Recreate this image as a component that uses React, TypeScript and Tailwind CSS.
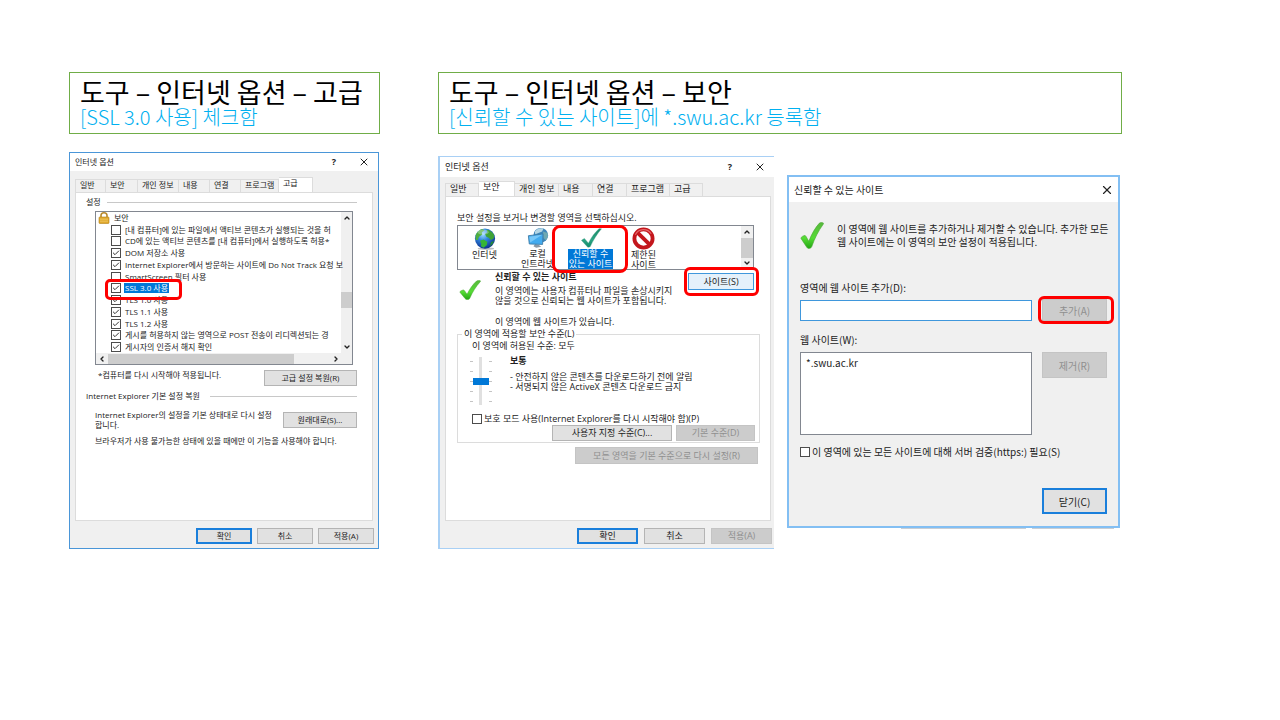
import type { ReactNode } from "react";
import { Check, ChevronDown, ChevronLeft, ChevronRight, ChevronUp, X } from "lucide-react";

const wideStack = "font-['Open_Sans','Noto_Sans_CJK_KR',sans-serif]";
const plainStack = "font-['Noto_Sans_CJK_KR',sans-serif]";

function Heading({ title, note }: { title: string; note: string }) {
  return (
    <header className={"border border-[#70ad47] bg-white px-2.5 py-[5px] whitespace-nowrap " + plainStack}>
      <h2 className="text-[27px] leading-7 text-black">{title}</h2>
      <p className="text-[20px] leading-[22px] font-light text-[#00b0f0]">{note}</p>
    </header>
  );
}

function Highlight({ className }: { className: string }) {
  return <span aria-hidden="true" className={"pointer-events-none absolute z-10 border-[3px] border-[#fe0000] " + className} />;
}

function Button({
  children,
  className,
  primary,
  disabled,
}: {
  children: ReactNode;
  className: string;
  primary?: boolean;
  disabled?: boolean;
}) {
  const look = disabled
    ? "border border-[#c4c4c4] bg-[#cccccc] text-[#8f8f8f]"
    : primary
      ? "border-2 border-[#1a7fdb] bg-[#e1e1e1]"
      : "border border-[#b4b4b4] bg-[#e1e1e1]";
  return (
    <button
      type="button"
      disabled={disabled}
      className={"flex flex-none items-center justify-center whitespace-nowrap " + look + " " + className}
    >
      {children}
    </button>
  );
}

function CheckBox({
  label,
  checked,
  selected,
  className = "",
  gap = "ml-0.5",
}: {
  label: string;
  checked?: boolean;
  selected?: boolean;
  className?: string;
  gap?: string;
}) {
  return (
    <label className={"flex min-w-0 items-center whitespace-nowrap " + className}>
      <span className="grid size-[10px] flex-none">
        <input
          type="checkbox"
          defaultChecked={checked}
          className="peer col-start-1 row-start-1 size-full appearance-none border border-[#4c4c4c] bg-white"
        />
        <Check
          strokeWidth={3}
          className="pointer-events-none invisible col-start-1 row-start-1 size-2 place-self-center text-[#333] peer-checked:visible"
        />
      </span>
      <span className={selected ? "ml-[3px] bg-[#0078d7] px-px text-white" : gap}>{label}</span>
    </label>
  );
}

function Tabs({ items, active }: { items: { name: string; width: string }[]; active: string }) {
  return (
    <div role="tablist" className="flex items-end">
      {items.map(({ name, width }) => (
        <button
          key={name}
          type="button"
          role="tab"
          aria-selected={name === active}
          className={
            "flex justify-start border-t border-r border-[#dcdcdc] pl-1 whitespace-nowrap " +
            width +
            (name === active ? " h-[15px] bg-white" : " h-[13px] bg-[#f0f0f0]")
          }
        >
          {name}
        </button>
      ))}
    </div>
  );
}

function GreenCheck({ className, tone = "green" }: { className: string; tone?: "green" | "teal" }) {
  const id = "tick-" + tone;
  const green = tone === "green";
  return (
    <svg viewBox="0 0 24 24" preserveAspectRatio="none" className={className} aria-hidden="true">
      <defs>
        <linearGradient id={id} x1="0" y1="0" x2="0" y2="1">
          <stop offset="0" stopColor={green ? "#58b83c" : "#1c8a68"} />
          <stop offset="0.6" stopColor={green ? "#55dc35" : "#2ba583"} />
          <stop offset="1" stopColor={green ? "#22a512" : "#118a6b"} />
        </linearGradient>
      </defs>
      {green ? (
        <path
          d="M1 14.600Q.8 13.600 2.400 12.800L4.400 12Q5.400 11.800 6 12.800L8.800 17.200C11.600 10.800 15 5.400 19.200 1.200Q20.200.4 21.400.5L23.200.8Q23.900 1.200 23.200 2C18.400 7.800 14.600 14.600 11.800 21.800Q11.200 23.200 9.800 23.400L8.600 23.500Q7.400 23.500 6.600 22.200Z"
          fill={"url(#" + id + ")"}
          stroke="#49a833"
          strokeWidth="0.6"
        />
      ) : (
        <path
          d="M1.600 14.800 4.800 12.600 9.200 18.200C12.400 11 16.400 5 20.800.8L23.400 1C18.600 7.200 14.400 14.600 11 22.600L8.600 23.200Z"
          fill={"url(#" + id + ")"}
          stroke="#208a70"
          strokeWidth="0.4"
        />
      )}
    </svg>
  );
}

function Globe() {
  return (
    <svg viewBox="0 0 24 24" className="size-[22px]" aria-hidden="true">
      <defs>
        <radialGradient id="sea" cx="0.4" cy="0.3" r="0.75">
          <stop offset="0" stopColor="#9fdcff" />
          <stop offset="0.4" stopColor="#2f86e0" />
          <stop offset="1" stopColor="#0a2a86" />
        </radialGradient>
      </defs>
      <ellipse cx="13" cy="22.500" rx="9" ry="1.200" fill="#b9bcc2" />
      <circle cx="12" cy="11.500" r="11" fill="url(#sea)" />
      <path d="M1.800 8C3 4.500 6 2 9 1.200L11.500 2.500 8.500 4.500 9 7 5.500 9.500 4 13 1.800 13Z" fill="#4fae3e" />
      <path d="M13.500 1.500C17.500 2 20.800 4.500 22 8L21.500 11.500 18.500 13 16 10.500 13.500 9.500 12 6.500 14.500 4.500Z" fill="#3fa338" />
      <path d="M6.500 14 10.500 12.500 14.500 15 14 18.500 10.500 21.500 7.500 20 8 17.500Z" fill="#36b436" />
      <path d="M18.500 15.500 21.800 14C21.200 16.500 19.500 18.800 17.500 20Z" fill="#258a36" />
      <ellipse cx="10" cy="4.500" rx="6" ry="2.800" fill="#fff" opacity="0.3" />
    </svg>
  );
}

function Intranet() {
  return (
    <svg viewBox="0 0 24 24" className="size-[22px]" aria-hidden="true">
      <circle cx="15" cy="9" r="8" fill="#3e86ba" />
      <path d="M8.500 5C11 1.500 15 .8 18 1.600L16.500 5 12.500 6.500 9 8Z" fill="#b5d6e4" />
      <path d="M17.500 5 22.500 6.500C23.300 9.500 22.500 12.500 20.500 14.500L18 12Z" fill="#6fa9b2" />
      <path d="M9 18.500 13 19.500 15.500 21.500 10 22.500 7 21Z" fill="#8a98a4" />
      <path d="M1.500 9.500 17.500 7.500 17 19 2.500 18.500Z" fill="#43abef" stroke="#3f7ea8" strokeWidth="1" />
      <path d="M2.500 10.500 16.500 8.500 3.500 17Z" fill="#8ad2fb" opacity="0.75" />
    </svg>
  );
}

function Prohibited() {
  return (
    <svg viewBox="0 0 24 24" className="size-[23px]" aria-hidden="true">
      <circle cx="12" cy="12" r="9.500" fill="#fff" stroke="#c3161c" strokeWidth="4" />
      <path d="M5.500 5.500 18.500 18.500" stroke="#c3161c" strokeWidth="4" />
      <path d="M3.500 8A9.500 9.500 0 0 1 20 7" fill="none" stroke="#e5676b" strokeWidth="1.200" />
    </svg>
  );
}

function Padlock() {
  return (
    <svg viewBox="0 0 12 12" className="size-3" aria-hidden="true">
      <path d="M3 6V3.600A3 2.800 0 0 1 9 3.600V6" fill="none" stroke="#b98a2e" strokeWidth="1.600" />
      <rect x="1" y="5" width="10" height="6.500" rx="0.800" fill="#e0a92c" stroke="#b47f17" strokeWidth="0.600" />
      <path d="M2 7.200H10M2 9.200H10" stroke="#f3cf73" strokeWidth="0.700" />
    </svg>
  );
}

const advancedTabs = [
  { name: "일반", width: "w-[31px] border-l" },
  { name: "보안", width: "w-8" },
  { name: "개인 정보", width: "w-[41px]" },
  { name: "내용", width: "w-[31px]" },
  { name: "연결", width: "w-[31px]" },
  { name: "프로그램", width: "w-[38px]" },
  { name: "고급", width: "w-[34px]" },
];

const securityTabs = [
  { name: "일반", width: "w-[34px] border-l" },
  { name: "보안", width: "w-9" },
  { name: "개인 정보", width: "w-11" },
  { name: "내용", width: "w-[34px]" },
  { name: "연결", width: "w-[34px]" },
  { name: "프로그램", width: "w-[43px]" },
  { name: "고급", width: "w-[33px]" },
];

const options = [
  { label: "[내 컴퓨터]에 있는 파일에서 액티브 콘텐츠가 실행되는 것을 허", checked: false },
  { label: "CD에 있는 액티브 콘텐츠를 [내 컴퓨터]에서 실행하도록 허용*", checked: false },
  { label: "DOM 저장소 사용", checked: true },
  { label: "Internet Explorer에서 방문하는 사이트에 Do Not Track 요청 보", checked: true },
  { label: "SmartScreen 필터 사용", checked: false },
  { label: "SSL 3.0 사용", checked: true },
  { label: "TLS 1.0 사용", checked: true },
  { label: "TLS 1.1 사용", checked: true },
  { label: "TLS 1.2 사용", checked: true },
  { label: "게시를 허용하지 않는 영역으로 POST 전송이 리디렉션되는 경", checked: true },
  { label: "게시자의 인증서 해지 확인", checked: true },
];

function TitleBar({ title, help, close = "size-3", className }: { title: string; help?: boolean; close?: string; className: string }) {
  return (
    <div className={"flex items-center justify-between bg-white " + className}>
      <h3>{title}</h3>
      <div className="flex items-center gap-[22px]">
        {help && (
          <button type="button" aria-label="도움말" className="text-[9px] font-bold">
            ?
          </button>
        )}
        <button type="button" aria-label="닫기">
          <X strokeWidth={2} className={close} />
        </button>
      </div>
    </div>
  );
}

function AdvancedDialog() {
  return (
    <section className="mt-[18px] mr-px flex min-h-[397px] flex-col border border-[#4a96d8] bg-[#f0f0f0] text-[8px] leading-[10px] text-[#222]">
      <TitleBar title="인터넷 옵션" help className="h-[18px] pr-2 pl-[5px]" />
      <div className="flex flex-1 flex-col px-[5px] pt-1.5">
        <Tabs items={advancedTabs} active="고급" />
        <div role="tabpanel" className="flex-1 border border-[#dcdcdc] bg-white px-[15px] pt-[3px] pl-2.5">
          <div className="flex h-3 items-center gap-1.5">
            설정
            <span className="h-px flex-1 bg-[#c8c8c8]" />
          </div>
          <div className="mt-[3px] mr-1 ml-[9px] border border-[#828790] bg-white">
            <div className="flex h-[141px]">
              <div className="grid min-w-0 flex-1 grid-cols-[minmax(0,1fr)] grid-rows-12">
                <div className="flex items-center gap-1 pl-0.5">
                  <Padlock />
                  보안
                </div>
                {options.map(({ label, checked }) => (
                  <div key={label} className="relative flex items-center pl-[15px]">
                    <CheckBox label={label} checked={checked} selected={label.startsWith("SSL")} gap="ml-1" />
                    {label.startsWith("SSL") && <Highlight className="-top-1 left-[9px] h-[21px] w-[77px] rounded-[5px]" />}
                  </div>
                ))}
              </div>
              <div className="flex w-[11px] flex-none flex-col items-center justify-between bg-[#f0f0f0] py-0.5">
                <ChevronUp strokeWidth={4} className="size-2" />
                <span className="mt-[70px] h-4 w-full bg-[#cdcdcd]" />
                <span className="flex-1" />
                <ChevronDown strokeWidth={4} className="size-2" />
              </div>
            </div>
            <div className="flex h-[11px] items-center bg-[#f0f0f0] pr-3 pl-0.5">
              <ChevronLeft strokeWidth={4} className="size-2" />
              <span className="ml-0.5 h-[10px] w-[77%] bg-[#cdcdcd]" />
              <ChevronRight strokeWidth={4} className="ml-auto size-2" />
            </div>
          </div>
          <div className="mt-[5px] flex items-start justify-between pl-3">
            <p>*컴퓨터를 다시 시작해야 적용됩니다.</p>
            <Button className="h-4 w-[93px]">고급 설정 복원(R)</Button>
          </div>
          <div className="mt-1 flex h-3 items-center gap-2.5">
            Internet Explorer 기본 설정 복원
            <span className="h-px flex-1 bg-[#c8c8c8]" />
          </div>
          <div className="mt-2 flex items-center justify-between pl-[9px]">
            <p>
              Internet Explorer의 설정을 기본 상태대로 다시 설정
              <br />
              합니다.
            </p>
            <Button className="h-4 w-[74px]">원래대로(S)...</Button>
          </div>
          <p className="mt-1.5 pl-[9px] whitespace-nowrap">브라우저가 사용 불가능한 상태에 있을 때에만 이 기능을 사용해야 합니다.</p>
        </div>
      </div>
      <footer className="flex justify-end gap-[5px] px-1 pt-[7px] pb-1">
        <Button primary className="h-4 w-14">확인</Button>
        <Button className="h-4 w-14">취소</Button>
        <Button className="h-4 w-14">적용(A)</Button>
      </footer>
    </section>
  );
}

function Zone({ icon, lines, selected }: { icon: ReactNode; lines: string[]; selected?: boolean }) {
  return (
    <li className="relative flex w-[53px] flex-none flex-col items-center">
      <span className="flex h-[23px] items-center">{icon}</span>
      <span className={"text-center whitespace-nowrap " + (selected ? "bg-[#0078d7] px-px text-white" : "")}>
        {lines.map((line) => (
          <span key={line} className="block">
            {line}
          </span>
        ))}
      </span>
      {selected && <Highlight className="-top-0.5 -left-3 h-12 w-[76px] rounded-lg" />}
    </li>
  );
}

function SecurityDialog() {
  return (
    <section className="mt-[22px] flex min-h-[393px] min-w-0 flex-col self-start border-y border-l-2 border-[#a9d0f5] bg-[#f0f0f0] text-[9px] leading-[10px] text-[#222]">
      <TitleBar title="인터넷 옵션" help className="h-5 pr-2 pl-[5px]" />
      <div className="flex flex-1 flex-col pt-1 pr-[3px] pl-[5px]">
        <Tabs items={securityTabs} active="보안" />
        <div role="tabpanel" className="flex-1 border border-[#dcdcdc] bg-white pr-2.5 pl-[11px]">
          <p className="mt-4">보안 설정을 보거나 변경할 영역을 선택하십시오.</p>
          <div className="mt-0.5 mr-[6px] flex h-[45px] border border-[#828790] bg-white">
            <ul className="flex flex-1 pt-px">
              <Zone icon={<Globe />} lines={["인터넷"]} />
              <Zone icon={<Intranet />} lines={["로컬", "인트라넷"]} />
              <Zone icon={<GreenCheck tone="teal" className="h-5 w-[22px]" />} lines={["신뢰할 수", "있는 사이트"]} selected />
              <Zone icon={<Prohibited />} lines={["제한된", "사이트"]} />
            </ul>
            <div className="flex w-3 flex-none flex-col items-center justify-between bg-[#f0f0f0] py-0.5">
              <ChevronUp strokeWidth={4} className="size-2" />
              <span className="h-5 w-full bg-[#cdcdcd]" />
              <ChevronDown strokeWidth={4} className="size-2" />
            </div>
          </div>
          <div className="mt-0.5 flex">
            <GreenCheck className="mt-2 ml-0.5 h-5 w-[22px]" />
            <div className="ml-3.5 flex-1 whitespace-nowrap">
              <h4 className="font-bold">신뢰할 수 있는 사이트</h4>
              <p className="mt-1">
                이 영역에는 사용자 컴퓨터나 파일을 손상시키지
                <br />
                않을 것으로 신뢰되는 웹 사이트가 포함됩니다.
              </p>
              <p className="mt-[11px]">이 영역에 웹 사이트가 있습니다.</p>
            </div>
            <div className="relative mr-1.5 self-start">
              <button type="button" className="mt-px flex h-[17px] w-[66px] items-center justify-center border border-[#3f97dc] bg-[#e5f1fb]">
                사이트(S)
              </button>
              <Highlight className="-top-[5px] -left-1 h-[29px] w-[75px] rounded-md" />
            </div>
          </div>
          <fieldset className="mt-0.5 h-[114px] min-w-0 border border-[#dcdcdc] pr-1 pl-3.5">
            <legend className="-ml-2.5 px-0.5">이 영역에 적용할 보안 수준(L)</legend>
            <p className="mt-0.5">이 영역에 허용된 수준: 모두</p>
            <div className="mt-[5px] flex h-[52px]">
              <div className="-ml-0.5 flex h-[50px] items-center">
                <Ticks />
                <input
                  type="range"
                  aria-label="보안 수준"
                  defaultValue={50}
                  className="h-12 w-4 appearance-none bg-[linear-gradient(to_right,transparent_6px,#e0e0e0_6px,#e0e0e0_9px,transparent_9px)] [direction:rtl] [writing-mode:vertical-lr] [&::-webkit-slider-thumb]:h-[7px] [&::-webkit-slider-thumb]:w-4 [&::-webkit-slider-thumb]:appearance-none [&::-webkit-slider-thumb]:bg-[#0078d7]"
                />
                <Ticks />
              </div>
              <div className="ml-[18px] whitespace-nowrap">
                <h4 className="font-bold">보통</h4>
                <ul className="mt-1.5">
                  <li>- 안전하지 않은 콘텐츠를 다운로드하기 전에 알림</li>
                  <li>- 서명되지 않은 ActiveX 콘텐츠 다운로드 금지</li>
                </ul>
              </div>
            </div>
            <CheckBox label="보호 모드 사용(Internet Explorer를 다시 시작해야 함)(P)" className="mt-1.5" />
            <div className="mt-px flex justify-end gap-1">
              <Button className="h-4 w-[120px]">사용자 지정 수준(C)...</Button>
              <Button disabled className="h-4 w-[79px]">기본 수준(D)</Button>
            </div>
          </fieldset>
          <div className="mt-1 mr-0.5 flex justify-end">
            <Button disabled className="h-[17px] w-[183px]">모든 영역을 기본 수준으로 다시 설정(R)</Button>
          </div>
        </div>
      </div>
      <footer className="flex justify-end gap-1.5 px-0.5 pt-[7px] pb-1">
        <Button primary className="h-4 w-[61px]">확인</Button>
        <Button className="h-4 w-[61px]">취소</Button>
        <Button disabled className="h-4 w-[61px]">적용(A)</Button>
      </footer>
    </section>
  );
}

function Ticks() {
  return (
    <span aria-hidden="true" className="flex h-[41px] w-[3px] flex-col justify-between">
      <span className="h-px bg-[#c4c4c4]" />
      <span className="h-px bg-[#c4c4c4]" />
      <span className="h-px bg-[#c4c4c4]" />
      <span className="h-px bg-[#c4c4c4]" />
      <span className="h-px bg-[#c4c4c4]" />
    </span>
  );
}

function TrustedSitesDialog() {
  return (
    <div className={"mt-[41px] min-w-0 " + plainStack}>
      <section className="flex min-h-[353px] flex-col border-2 border-[#83bff3] bg-[#f0f0f0] text-[10px] leading-[13px] text-[#222]">
        <TitleBar title="신뢰할 수 있는 사이트" close="size-[14px]" className="h-[25px] pr-1 pl-[5px]" />
        <div className="flex flex-1 flex-col px-[11px]">
          <div className="mt-5 flex gap-[13px]">
            <GreenCheck className="h-[27px] w-6 flex-none" />
            <p className="whitespace-nowrap">
              이 영역에 웹 사이트를 추가하거나 제거할 수 있습니다. 추가한 모든
              <br />웹 사이트에는 이 영역의 보안 설정이 적용됩니다.
            </p>
          </div>
          <label htmlFor="site" className="mt-8">
            영역에 웹 사이트 추가(D):
          </label>
          <div className="mt-[5px] flex items-center gap-2.5">
            <input id="site" type="text" className="h-[21px] w-full min-w-0 flex-1 border border-[#3f97dc] bg-white px-1 outline-none" />
            <div className="relative">
              <Button disabled className="h-[22px] w-[65px]">추가(A)</Button>
              <Highlight className="-top-[3px] -left-1 h-7 w-[76px] rounded-md" />
            </div>
          </div>
          <label htmlFor="sites" className="mt-3">
            웹 사이트(W):
          </label>
          <div className="mt-1.5 flex items-start gap-2.5">
            <textarea
              id="sites"
              readOnly
              defaultValue="*.swu.ac.kr"
              className="h-[83px] w-full min-w-0 flex-1 resize-none border border-[#828790] bg-white px-[5px] py-[3px] outline-none"
            />
            <Button disabled className="h-[26px] w-[65px]">제거(R)</Button>
          </div>
          <CheckBox label="이 영역에 있는 모든 사이트에 대해 서버 검증(https:) 필요(S)" className="mt-2.5" />
          <div className="mt-auto mb-3 flex justify-end">
            <Button primary className="h-[26px] w-[65px]">닫기(C)</Button>
          </div>
        </div>
      </section>
      <div aria-hidden="true" className="flex justify-end gap-1.5 pr-1.5">
        <span className="h-px w-[125px] bg-[#c9ced4]" />
        <span className="h-px w-[82px] bg-[#c9ced4]" />
      </div>
    </div>
  );
}

export default function App() {
  return (
    <main className={"min-h-screen bg-white pt-[72px] pr-[158px] pl-[69px] " + wideStack}>
      <div className="grid grid-cols-[311fr_684fr] gap-[58px]">
        <div className="min-w-0">
          <Heading title="도구 – 인터넷 옵션 – 고급" note="[SSL 3.0 사용] 체크함" />
          <AdvancedDialog />
        </div>
        <div className="min-w-0">
          <Heading title="도구 – 인터넷 옵션 – 보안" note="[신뢰할 수 있는 사이트]에 *.swu.ac.kr 등록함" />
          <div className="mr-0.5 grid grid-cols-[336fr_333fr] items-start gap-[13px]">
            <SecurityDialog />
            <TrustedSitesDialog />
          </div>
        </div>
      </div>
    </main>
  );
}
